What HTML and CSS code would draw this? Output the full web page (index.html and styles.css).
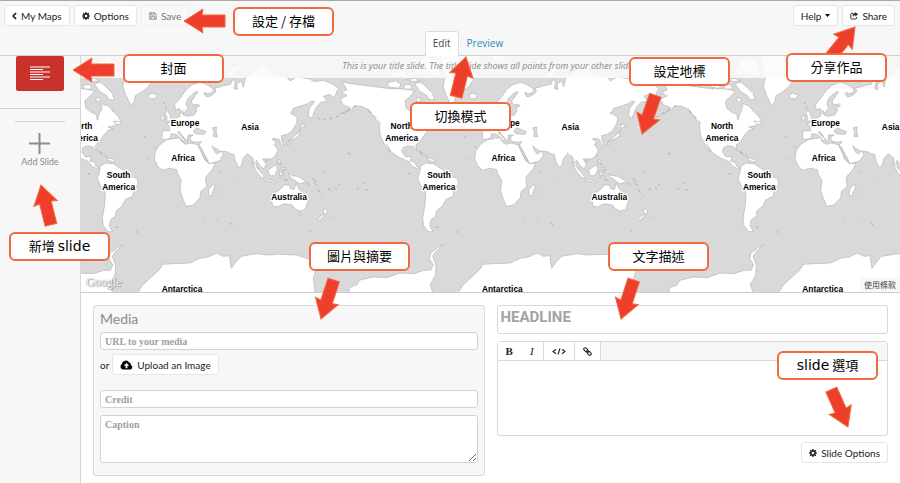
FILE: index.html
```html
<!DOCTYPE html>
<html lang="zh-Hant">
<head>
<meta charset="utf-8">
<title>Map editor</title>
<link rel="stylesheet" href="styles.css">
</head>
<body>
<svg class="defs" aria-hidden="true">
  <defs>
    <path id="arrow" d="M0 0L19 -12L18 -6H41V6H18L19 12Z"/>
    <path id="gear" fill-rule="evenodd" d="M6.8 0h2.4l.4 2.2 1.3.6 1.9-1.3 1.7 1.7-1.3 1.9.6 1.3 2.2.4v2.4l-2.2.4-.6 1.3 1.3 1.9-1.7 1.7-1.9-1.3-1.3.6-.4 2.2H6.8l-.4-2.2-1.3-.6-1.9 1.3-1.7-1.7 1.3-1.9-.6-1.3L0 9.200V6.800l2.200-.4.6-1.300L1.500 3.200l1.700-1.700 1.900 1.300 1.300-.6zM8 5.300a2.700 2.700 0 1 0 0 5.400 2.700 2.700 0 0 0 0-5.400z"/>
  </defs>
</svg>

<header class="header">
  <div class="toolbar">
    <button class="btn" type="button"><svg class="icon slim" viewBox="0 0 10 16"><path d="M8 2L2.500 8L8 14" fill="none" stroke="currentColor" stroke-width="3.500"/></svg>My Maps</button>
    <button class="btn" type="button"><svg class="icon" viewBox="0 0 16 16"><use href="#gear"/></svg>Options</button>
    <button class="btn" type="button" disabled><svg class="icon" viewBox="0 0 16 16"><path d="M1.500 1.500h10l3 3v10h-13zM4 1.500v4.500h6.500V1.500M4 14.500V9.500h8v5" fill="none" stroke="currentColor" stroke-width="1.500"/></svg>Save</button>
    <span class="spacer"></span>
    <button class="btn" type="button">Help<svg class="caret" viewBox="0 0 10 6"><path d="M0 0h10L5 6z"/></svg></button>
    <button class="btn" type="button"><svg class="icon" viewBox="0 0 16 16"><path d="M7 2.500H3.500a2 2 0 0 0-2 2v7.500a2 2 0 0 0 2 2H11a2 2 0 0 0 2-2V10" fill="none" stroke="currentColor" stroke-width="1.800"/><path d="M10.500 0L16 4.500L10.500 9V6.300C7.500 6.300 6 7.500 6.500 10.500C3.500 6 6 2.800 10.500 2.700z"/></svg>Share</button>
  </div>
  <nav class="tabs">
    <a class="tab active" href="#edit">Edit</a>
    <a class="tab" href="#preview">Preview</a>
  </nav>
</header>

<div class="workspace">
  <aside class="sidebar">
    <button class="slide-thumb" type="button" aria-label="Title slide">
      <svg viewBox="0 0 20 15"><path d="M0 1h20M0 3.500h13M0 6h20M0 8.500h13M0 11h20M0 13.500h13" stroke="#fff" stroke-width="1.200"/></svg>
    </button>
    <hr class="rule-full">
    <hr class="rule-short">
    <button class="add-slide" type="button">
      <svg viewBox="0 0 21 21"><path d="M10.500 0v21M0 10.500h21" stroke="#8c8c8c" stroke-width="2"/></svg>
      Add Slide
    </button>
  </aside>

  <main class="main">
    <section class="map" id="edit" aria-label="Map">
      <svg class="world" viewBox="3 3 2457 708" preserveAspectRatio="xMinYMin slice">
        <defs>
          <filter id="coast" x="-5%" y="-5%" width="110%" height="110%">
            <feTurbulence type="fractalNoise" baseFrequency="0.18" numOctaves="3" seed="4" result="n"/>
            <feDisplacementMap in="SourceGraphic" in2="n" scale="5" xChannelSelector="R" yChannelSelector="G"/>
          </filter>
          <g id="land">
            <path d="M247 228L270 227L268 213L258 207L272 202L286 190L300 184L301 171L308 166L310 180L322 184L342 180L350 168L348 158L360 152L352 148L338 150L334 138L346 122L354 110L344 112L324 130L318 148L324 158L314 172L306 176L298 160L288 166L283 150L300 130L318 105L335 90L360 82L378 88L398 100L400 112L384 116L372 112L380 126L394 122L408 110L405 98L420 96L430 92L452 88L458 72L466 82L462 100L472 104L470 86L484 78L490 96L496 70L512 60L526 44L548 26L566 34L570 50L590 58L620 66L630 78L650 66L690 72L700 80L730 76L758 88L776 100L770 110L764 128L748 118L730 124L742 138L722 142L708 158L694 192L685 180L688 160L704 140L694 138L684 146L660 154L640 160L632 176L652 186L650 204L636 228L622 238L604 242L606 262L614 272L602 270L598 254L584 250L576 252L590 262L582 268L594 285L588 302L572 312L560 312L548 312L558 328L552 342L538 330L530 316L526 322L534 342L540 356L528 346L522 328L518 308L502 296L490 310L484 332L476 338L466 318L462 298L452 296L440 290L418 288L400 276L396 272L404 290L412 298L424 288L430 300L416 318L388 326L378 308L364 284L356 272L364 260L350 262L332 258L330 246L340 240L324 240L322 260L310 246L298 230L292 232L314 254L308 258L296 244L288 238L274 236L270 250L252 254L246 248Z"/>
            <path d="M262 254L300 248L304 260L318 268L330 264L356 270L364 292L374 314L386 326L406 324L398 342L376 368L380 394L362 410L360 428L340 450L318 454L308 430L300 405L304 376L292 356L290 344L268 340L246 346L232 332L223 312L226 290L240 268Z"/>
            <path d="M402 386L404 396L394 422L386 422L386 404Z"/>
            <path d="M60 334L76 324L100 326L124 342L142 358L172 372L174 388L162 402L158 424L136 434L126 454L108 468L106 484L92 494L88 512L98 530L84 530L70 512L67 490L74 450L76 412L62 394L52 370L58 352Z"/>
            <path d="M262 164L270 180L274 196L256 200L262 190L256 176ZM244 186L254 180L252 194L242 196Z"/>
            <path d="M205 120L216 114L232 120L226 130L212 132Z"/>
            <path d="M664 206L678 212L662 220ZM660 224L656 244L642 252L626 258L640 246L652 236ZM624 258L628 268L620 270Z"/>
            <path d="M514 322L534 342L552 364L546 370L530 352ZM552 370L592 380L588 384L552 376ZM564 346L580 334L590 330L592 344L584 362L570 362ZM598 346L616 344L606 350L612 364L604 358L600 370ZM594 312L602 318L602 328L594 326ZM604 336L614 338L610 348ZM588 296L592 300L588 306ZM558 316L564 318L558 322Z"/>
            <path d="M626 356L638 362L654 364L672 376L690 390L674 382L658 386L644 376L630 366Z"/>
            <path d="M574 430L578 416L598 406L612 390L628 390L630 400L642 404L648 384L658 404L674 418L684 436L676 464L658 468L644 460L636 450L612 446L592 456L578 454ZM654 474L664 474L660 484Z"/>
            <path d="M732 458L742 468L738 478L730 474ZM728 478L732 484L718 496L712 494Z"/>
            <path d="M-175 80L-150 86L-98 92L-40 100L20 102L44 108L30 124L14 138L18 160L34 172L48 178L52 196L58 176L66 160L64 146L84 152L98 168L114 184L122 198L104 212L84 216L100 222L84 226L72 240L60 258L46 270L50 288L40 276L22 272L8 278L6 292L16 306L34 304L30 318L44 322L48 334L62 340L52 342L36 334L26 320L-2 308L-26 292L-42 268L-30 292L-44 276L-60 242L-64 208L-80 186L-94 164L-116 154L-138 152L-146 162L-172 176L-150 158L-172 150L-180 132L-160 122L-178 112L-160 104Z"/>
            <path d="M42 86L62 82L78 96L96 114L104 134L88 134L78 120L60 110ZM10 90L30 88L36 102L12 102ZM-40 84L-18 78L2 86L-4 100L-34 96ZM18 74L42 70L60 76L40 80ZM48 128L62 130L60 140L48 138ZM100 198L120 200L124 208L108 208Z"/>
            <path d="M40 50L56 20L80 0L110 20L120 66L96 60L80 54L60 60ZM-30 56L0 46L20 56L10 66L-20 66Z"/>
            <path d="M120 0L126 40L134 70L128 94L138 122L152 150L162 142L166 122L184 112L204 96L226 66L240 20L240 0Z"/>
            <path d="M60 290L76 300L80 306L66 298ZM82 308L104 314L102 322L84 316ZM270 0L280 16L300 24L316 12L310 0ZM440 60L450 40L480 30L488 36L462 52L450 70Z"/>
            <path d="M172 716L188 690L210 670L238 644L248 628L280 626L330 624L360 610L390 604L410 594L430 604L448 602L454 640L470 618L484 604L530 596L560 600L600 598L650 600L686 612L710 640L700 670L706 716Z"/>
            <path d="M808 716L806 698L830 690L838 676L880 666L920 668L960 654L1000 656L1032 646L1052 646L1060 630L1048 612L1052 594L1076 576L1090 568L1066 592L1058 604L1068 630L1066 660L1050 690L1060 716Z"/>
          </g>
          <path id="islands" d="M24 356h6M106 518l8 -2M168 530l6 2M192 244l6 4M222 276h5M205 312l3 4M712 188l8 4M730 192l8 1M748 192l10 -4M768 186l8 -3M782 178l9 -6M800 170l10 -8M820 156l6 -4M866 168l10 8M880 180l10 12M894 196l8 12M696 370l12 10M704 384l8 8M712 402l8 10M744 404l8 -4M764 398l6 4M774 392l6 -6M830 400l6 2M850 382l6 4M856 404h8M802 294l10 4M728 350l5 6M56 288l10 12M450 504l8 6M370 496l3 2M410 492l3 1M758 486l3 2M416 410l3 2M594 320l10 10M600 350l8 4M610 374l14 2M250 140l4 8M256 156l3 6M420 350l2 4M470 372l2 3M726 420l4 3M690 530l4 -2"/>
          <path id="seas" d="M340 228L350 218L362 224L378 230L374 238L346 236ZM398 218L410 216L408 228L412 246L400 244L402 232ZM354 272L362 276L384 318L378 318Z"/>
          <g id="labels">
            <text x="4" y="223">North</text><text x="4" y="259">America</text>
            <text x="116" y="370">South</text><text x="116" y="406">America</text>
            <text x="315" y="214">Europe</text>
            <text x="309" y="317">Africa</text>
            <text x="510" y="224">Asia</text>
            <text x="627" y="435">Australia</text>
            <text x="306" y="710">Antarctica</text>
          </g>
        </defs>
        <g class="land" filter="url(#coast)">
          <use href="#land" x="-961"/><use href="#land"/><use href="#land" x="961"/><use href="#land" x="1922"/>
          <g class="seas"><use href="#seas"/><use href="#seas" x="961"/><use href="#seas" x="1922"/></g>
        </g>
        <g class="islands">
          <use href="#islands"/><use href="#islands" x="961"/><use href="#islands" x="1922"/>
        </g>
        <g class="labels">
          <use href="#labels"/><use href="#labels" x="961"/><use href="#labels" x="1922"/>
        </g>
      </svg>
      <p class="hint">This is your title slide. The title slide shows all points from your other slides.</p>
      <span class="google">Google</span>
      <a class="terms" href="#terms">使用條款</a>
    </section>

    <form class="editor">
      <fieldset class="media">
        <h2>Media</h2>
        <input class="field" type="text" placeholder="URL to your media" aria-label="URL to your media">
        <div class="upload">or
          <button class="btn" type="button"><svg class="cloud" viewBox="0 0 24 18"><path fill-rule="evenodd" d="M6 17.500a5.500 5.500 0 0 1-2.500-10.200A7.300 7.300 0 0 1 17 4.500a4 4 0 0 1 3 4.300A4.600 4.600 0 0 1 19 17.500zM12 5.500L7 10.500h3.300V15h3.400v-4.500H17z"/></svg>Upload an Image</button>
        </div>
        <input class="field" type="text" placeholder="Credit" aria-label="Credit">
        <textarea class="field caption" placeholder="Caption" aria-label="Caption"></textarea>
      </fieldset>

      <div class="story">
        <input class="headline" type="text" placeholder="HEADLINE" aria-label="Headline">
        <div class="rich">
          <div class="rich-bar">
            <div class="group"><button type="button"><b>B</b></button><button type="button"><i>I</i></button></div>
            <div class="group"><button type="button" aria-label="Code"><svg class="code" viewBox="0 0 28 14"><path d="M8 2.500L2 7L8 11.500M20 2.500L26 7L20 11.500M16 1L12 13" fill="none" stroke="#222" stroke-width="2.200"/></svg></button></div>
            <div class="group"><button type="button" aria-label="Link"><svg class="link" viewBox="0 0 16 16"><g fill="none" stroke="#222" stroke-width="2"><rect x="1" y="2.500" width="8" height="5" rx="2.500" transform="rotate(45 5 5)"/><rect x="7" y="8.500" width="8" height="5" rx="2.500" transform="rotate(45 11 11)"/><path d="M6 6l4 4"/></g></svg></button></div>
          </div>
          <textarea class="body-text" aria-label="Text"></textarea>
        </div>
        <button class="btn slide-options" type="button"><svg class="icon" viewBox="0 0 16 16"><use href="#gear"/></svg>Slide Options</button>
      </div>
    </form>
  </main>
</div>

<div class="callout c-save"><svg class="pointer"><use href="#arrow"/></svg><span>設定 / 存檔</span></div>
<div class="callout c-cover"><svg class="pointer"><use href="#arrow"/></svg><span>封面</span></div>
<div class="callout c-add"><svg class="pointer"><use href="#arrow" transform="rotate(76)"/></svg><span>新增 <em>slide</em></span></div>
<div class="callout c-mode"><svg class="pointer"><use href="#arrow" transform="rotate(104)"/></svg><span>切換模式</span></div>
<div class="callout c-marker"><svg class="pointer"><use href="#arrow" transform="rotate(-71)"/></svg><span>設定地標</span></div>
<div class="callout c-share"><svg class="pointer"><use href="#arrow" transform="rotate(129)"/></svg><span>分享作品</span></div>
<div class="callout c-media"><svg class="pointer"><use href="#arrow" transform="rotate(-72)"/></svg><span>圖片與摘要</span></div>
<div class="callout c-text"><svg class="pointer"><use href="#arrow" transform="rotate(-72)"/></svg><span>文字描述</span></div>
<div class="callout c-options"><svg class="pointer"><use href="#arrow" transform="rotate(-114)"/></svg><span><em>slide</em> 選項</span></div>
</body>
</html>
```
FILE: styles.css
```css
* { box-sizing: border-box; }

body {
  position: relative;
  display: flex;
  flex-direction: column;
  min-height: 100vh;
  margin: 0;
  background: #f7f7f7;
  color: #222;
  font: 10px/14px Lato, "Noto Sans CJK TC", sans-serif;
}

button, input, textarea { font: inherit; color: inherit; }
.defs { position: absolute; width: 0; height: 0; }

/* Header */
.header {
  border-top: 1px solid #a9a7a9;
  border-bottom: 1px solid #cfcfcf;
}
.toolbar {
  display: flex;
  gap: 4px;
  padding: 4px 5px 5px 4px;
}
.spacer { flex: 1; }

.btn {
  display: inline-flex;
  align-items: center;
  gap: 4px;
  height: 21px;
  padding: 0 7px;
  border: 1px solid #e6e6e6;
  border-radius: 3px;
  background: #fff;
  white-space: nowrap;
}
.btn:disabled { background: #f8f8f8; color: #777; border-color: #efefef; }
.icon { width: 8px; height: 8px; fill: currentColor; }
.icon.slim { width: 5px; }
.caret { width: 5px; height: 3px; }

.tabs {
  display: flex;
  justify-content: center;
  padding-left: 36px;
  font: 10px/14px "Open Sans", sans-serif;
}
.tab {
  height: 24px;
  padding: 4px 7px;
  border: 1px solid transparent;
  border-bottom: 0;
  border-radius: 3px 3px 0 0;
  color: #2a8cc4;
  text-decoration: none;
}
.tab.active {
  height: 25px;
  margin-bottom: -1px;
  border-color: #dcdcdc;
  background: #fff;
  color: #444;
}

/* Layout */
.workspace { display: flex; flex: 1; }
.sidebar {
  display: flex;
  flex-direction: column;
  align-items: center;
  flex: 0 0 80px;
}
.slide-thumb {
  display: grid;
  place-items: center;
  width: 48px;
  height: 35px;
  padding: 0;
  border: 0;
  border-radius: 2px;
  background: #c8322b;
}
.slide-thumb svg { width: 20px; height: 15px; }
.sidebar hr { margin: 0; border: 0; border-top: 1px solid #d2d2d2; }
.sidebar .rule-full { width: 100%; margin-top: 17px; }
.sidebar .rule-short { width: 50px; margin-top: 12px; }
.add-slide {
  display: flex;
  flex-direction: column;
  align-items: center;
  margin-top: 11px;
  padding: 0;
  border: 0;
  background: none;
  color: #8a8a8a;
  font-size: 9px;
  line-height: 16px;
}
.add-slide svg { width: 21px; height: 21px; }

.main {
  flex: 1;
  min-width: 0;
  border-left: 1px solid #d8d8d8;
  background: #fff;
}

/* Map */
.map {
  position: relative;
  height: 237px;
  overflow: hidden;
  border-bottom: 1px solid #ccc;
  background: #d9d9d9;
}
.world { display: block; width: 100%; height: 236px; }
.land { fill: #fff; stroke: #b4b4b4; stroke-width: 2; }
.seas { fill: #d9d9d9; }
.islands { fill: none; stroke: #999; stroke-width: 2; }
.labels {
  fill: #000;
  stroke: #fff;
  stroke-width: 8px;
  stroke-linejoin: round;
  paint-order: stroke;
  font: bold 25px "Liberation Sans", sans-serif;
  text-anchor: middle;
}
.hint {
  position: absolute;
  inset: 0 0 auto;
  height: 22px;
  margin: 0;
  background: rgba(250, 250, 250, .86);
  color: #888;
  font: italic 9px/20px "Open Sans", sans-serif;
  text-align: center;
}
.google {
  position: absolute;
  left: 5px;
  bottom: 2px;
  color: #fff;
  font: 12px/16px "Liberation Serif", serif;
  text-shadow: 0 0 1px #777, 1px 1px 1px #999;
}
.terms {
  position: absolute;
  right: 0;
  bottom: 0;
  padding: 0 4px;
  background: rgba(245, 245, 245, .8);
  color: #444;
  font-size: 8px;
  text-decoration: none;
}

/* Editor */
.editor {
  display: grid;
  grid-template-columns: 1fr 1fr;
  gap: 12px;
  padding: 12px;
}
.media {
  display: flex;
  flex-direction: column;
  min-width: 0;
  height: 171px;
  margin: 0;
  padding: 4px 6px;
  border: 1px solid #d9d9d9;
  border-radius: 3px;
  background: #f7f7f7;
}
.media h2 {
  margin: 0 0 4px;
  color: #8a8a8a;
  font-size: 14px;
  font-weight: 400;
  line-height: 18px;
}
.field {
  display: block;
  width: 100%;
  height: 18px;
  padding: 0 4px;
  border: 1px solid #d3d3d3;
  border-radius: 3px;
  background: #fff;
  font: bold 10px/14px "Liberation Serif", serif;
}
.field::placeholder { color: #a0a0a0; opacity: 1; }
.upload {
  display: flex;
  align-items: center;
  gap: 3px;
  margin: 4px 0 15px;
}
.cloud { width: 13px; height: 10px; }
.caption { height: 48px; margin-top: 7px; padding-top: 2px; }

.story { display: flex; flex-direction: column; min-width: 0; }
.headline {
  width: 100%;
  height: 29px;
  padding: 0 3px 6px;
  border: 1px solid #d9d9d9;
  border-radius: 3px;
  font: bold 15px/20px Roboto, sans-serif;
}
.headline::placeholder { color: #a3a3a3; opacity: 1; }
.rich {
  height: 95px;
  margin-top: 7px;
  display: flex;
  flex-direction: column;
  border: 1px solid #d9d9d9;
  border-radius: 3px;
}
.rich-bar {
  display: flex;
  height: 19px;
  border-bottom: 1px solid #d9d9d9;
  background: #f6f6f6;
}
.group { display: flex; border-right: 1px solid #d9d9d9; background: #fff; }
.group button {
  display: grid;
  place-items: center;
  min-width: 22px;
  padding: 0 8px;
  border: 0;
  background: none;
  font: 11px/14px "Liberation Serif", serif;
}
.link { width: 9px; height: 9px; }
.code { width: 14px; height: 7px; }
.body-text { flex: 1; border: 0; padding: 4px; resize: none; background: none; }
.slide-options { align-self: flex-end; margin-top: 6px; }

/* Annotations */
.callout {
  position: absolute;
  width: 101px;
  height: 29px;
  color: #000;
  font: 13px/24px "Noto Sans CJK TC", sans-serif;
  text-align: center;
}
.callout span {
  position: relative;
  display: block;
  height: 29px;
  border: 2px solid #f0693f;
  border-radius: 6px;
  background: #fff;
}
.callout em { font: 14px/24px "DejaVu Sans", sans-serif; }
.pointer {
  position: absolute;
  width: 1px;
  height: 1px;
  overflow: visible;
  fill: #ee3f2c;
  stroke: #f0693f;
  stroke-width: 1;
}
.c-save { left: 233px; top: 7px; }
.c-save .pointer { left: -49px; top: 14px; }
.c-cover { left: 123px; top: 54px; }
.c-cover .pointer { left: -50px; top: 16px; }
.c-add { left: 9px; top: 232px; }
.c-add .pointer { left: 32px; top: -47px; }
.c-mode { left: 410px; top: 102px; }
.c-mode .pointer { left: 56px; top: -45px; }
.c-marker { left: 629px; top: 57px; }
.c-marker .pointer { left: 13px; top: 77px; }
.c-share { right: 13px; top: 53px; }
.c-share .pointer { left: 69px; top: -26px; }
.c-media { left: 309px; top: 242px; }
.c-media .pointer { left: 12px; top: 77px; }
.c-text { left: 608px; top: 242px; }
.c-text .pointer { left: 13px; top: 77px; }
.c-options { right: 22px; top: 351px; }
.c-options .pointer { left: 71px; top: 76px; }
```
